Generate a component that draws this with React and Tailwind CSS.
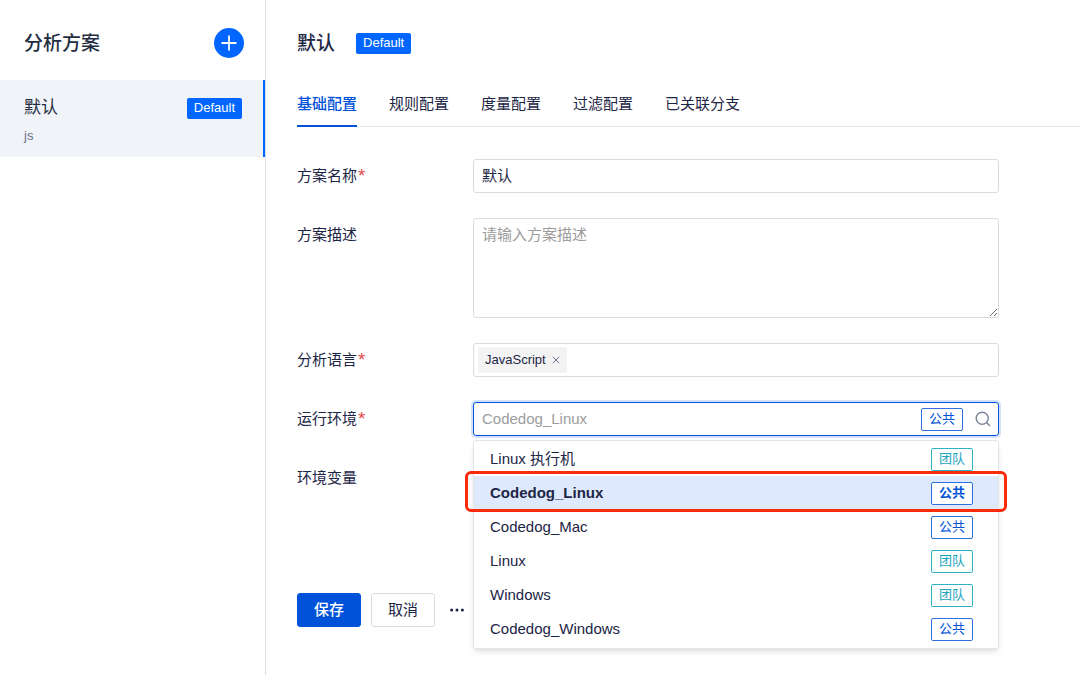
import React, { useState } from 'react';
import { clsx } from 'clsx';

const TABS = ['基础配置', '规则配置', '度量配置', '过滤配置', '已关联分支'];

const ENVS = [
  { name: 'Linux 执行机', scope: '团队' },
  { name: 'Codedog_Linux', scope: '公共' },
  { name: 'Codedog_Mac', scope: '公共' },
  { name: 'Linux', scope: '团队' },
  { name: 'Windows', scope: '团队' },
  { name: 'Codedog_Windows', scope: '公共' },
];

function DefaultBadge() {
  return (
    <span className="h-[21px] px-[7px] rounded-xs bg-[#0066ff] text-[13px] leading-5 text-white">
      Default
    </span>
  );
}

function ScopeTag({ scope }) {
  return (
    <span
      className={clsx(
        'shrink-0 h-[23px] px-[7px] border rounded-xs bg-white text-[13px] leading-5',
        scope === '公共' ? 'border-[#2f6fe0] text-[#0052d9]' : 'border-[#2db1c4] text-[#1aa5ba]'
      )}
    >
      {scope}
    </span>
  );
}

function Field({ label, htmlFor, required, children }) {
  return (
    <div className="flex items-start">
      <label htmlFor={htmlFor} className="flex w-[176px] shrink-0 leading-[34px]">
        {label}
        {required && <span className="ml-px text-[19px] text-[#e5484d]">*</span>}
      </label>
      <div className="relative flex-1 min-w-0">{children}</div>
    </div>
  );
}

export default function App() {
  const [activeTab, setActiveTab] = useState(TABS[0]);
  const [env, setEnv] = useState('Codedog_Linux');
  const [name, setName] = useState('默认');

  return (
    <div className="flex min-h-screen bg-white text-[15px] text-[#1c2545] font-['Liberation_Sans','Noto_Sans_CJK_SC',sans-serif]">
      {/* Scheme list */}
      <aside className="w-[266px] shrink-0 border-r border-[#d9dde5]">
        <div className="flex items-center justify-between h-20 pl-6 pr-[21px] pt-[6px]">
          <h2 className="pt-[2px] text-[19px] font-medium text-[#242e42]">分析方案</h2>
          <button
            type="button"
            aria-label="新建"
            className="flex items-center justify-center size-[30px] rounded-full bg-[#0066ff] text-white"
          >
            <svg viewBox="0 0 16 16" className="size-4" stroke="currentColor" strokeWidth="1.8" strokeLinecap="round">
              <path d="M8 1.2v13.6M1.2 8h13.6" />
            </svg>
          </button>
        </div>
        <a href="#default" className="block h-[77px] px-6 pt-[14px] border-r-2 border-[#0066ff] bg-[#f0f3f7]">
          <span className="flex items-center justify-between h-7 -mr-[3px]">
            <span className="text-[17px] text-[#242e42]">默认</span>
            <DefaultBadge />
          </span>
          <span className="block pt-[2px] text-[13px] leading-6 text-[#67728a]">js</span>
        </a>
      </aside>

      <main className="flex-1 min-w-0 pl-[31px]">
        <header className="flex items-center gap-[21px] h-20 pt-[6px]">
          <h1 className="pt-[2px] text-[19px] font-medium">默认</h1>
          <DefaultBadge />
        </header>

        <nav role="tablist" className="flex gap-8 h-[47px] border-b border-[#e3e6ed]">
          {TABS.map((tab) => (
            <button
              key={tab}
              type="button"
              role="tab"
              aria-selected={tab === activeTab}
              onClick={() => setActiveTab(tab)}
              className={clsx(
                'h-[47px] pt-[3px] border-b-2 cursor-pointer',
                tab === activeTab ? 'border-[#0052d9] text-[#0052d9] font-medium' : 'border-transparent'
              )}
            >
              {tab}
            </button>
          ))}
        </nav>

        <form className="pt-8 pr-[81px]" onSubmit={(e) => e.preventDefault()}>
          <div className="flex flex-col gap-[25px]">
            <Field label="方案名称" htmlFor="name" required>
              <input
                id="name"
                value={name}
                onChange={(e) => setName(e.target.value)}
                className="block w-full h-[34px] px-2 pb-[3px] border border-[#dcdcdc] rounded-[3px] outline-none"
              />
            </Field>

            <Field label="方案描述" htmlFor="desc">
              <textarea
                id="desc"
                placeholder="请输入方案描述"
                className="block w-full h-[100px] px-2 py-[5px] border border-[#dcdcdc] rounded-[3px] leading-[22px] placeholder:text-[#9c9c9c] outline-none"
              />
            </Field>

            <Field label="分析语言" htmlFor="lang" required>
              <div className="flex items-center h-[34px] px-1 border border-[#dcdcdc] rounded-[3px]">
                <span className="flex items-center gap-[6px] h-[26px] px-[7px] rounded-[3px] bg-[#f3f3f3] text-[13px]">
                  JavaScript
                  <button type="button" aria-label="移除 JavaScript" className="text-[#6b7286]">
                    <svg viewBox="0 0 8 8" className="size-2" stroke="currentColor" strokeWidth="1">
                      <path d="M.8.8l6.4 6.4M7.2.8L.8 7.2" />
                    </svg>
                  </button>
                </span>
                <input id="lang" className="flex-1 min-w-0 outline-none" />
              </div>
            </Field>

            <Field label="运行环境" htmlFor="env" required>
              <div className="flex items-center h-[34px] pl-2 pr-[7px] border border-[#0052d9] rounded-[3px] ring-2 ring-[#d4e1fb]">
                <input
                  id="env"
                  role="combobox"
                  aria-expanded="true"
                  aria-controls="env-list"
                  placeholder={env}
                  className="flex-1 min-w-0 placeholder:text-[#9c9c9c] outline-none"
                />
                <ScopeTag scope={ENVS.find((e) => e.name === env).scope} />
                <svg viewBox="0 0 16 16" className="size-4 ml-3" fill="none" stroke="#7d8699" strokeWidth="1.4">
                  <circle cx="7.2" cy="7.2" r="6" />
                  <path d="M11.6 11.6l3.4 3.4" />
                </svg>
              </div>

              <ul
                id="env-list"
                role="listbox"
                className="absolute z-10 top-full inset-x-0 mt-1 pt-px pb-[2px] border border-[#e1e5ec] rounded-[3px] bg-white shadow-md"
              >
                {ENVS.map((item) => (
                  <li key={item.name} role="option" aria-selected={item.name === env} className="relative">
                    <button
                      type="button"
                      onClick={() => setEnv(item.name)}
                      className={clsx(
                        'flex items-center justify-between w-full h-[34px] pl-4 pr-[25px] text-left cursor-pointer',
                        item.name === env && 'bg-[#dfe9fd] font-semibold'
                      )}
                    >
                      {item.name}
                      <ScopeTag scope={item.scope} />
                    </button>
                    {item.name === env && (
                      <span className="absolute -inset-x-[9px] -top-[5px] -bottom-[2px] z-10 border-3 border-[#fb2c0c] rounded-md pointer-events-none" />
                    )}
                  </li>
                ))}
              </ul>
            </Field>

            <Field label="环境变量" />
          </div>

          <div className="flex items-center gap-[10px] pt-[98px]">
            <button type="submit" className="h-[34px] px-4 border border-[#0052d9] rounded-[3px] bg-[#0052d9] text-white font-medium">
              保存
            </button>
            <button type="button" className="h-[34px] px-4 border border-[#dcdcdc] rounded-[3px] bg-white">
              取消
            </button>
            <button type="button" aria-label="更多" className="ml-1">
              <svg viewBox="0 0 16 16" className="size-4" fill="currentColor">
                <circle cx="2.6" cy="8" r="1.5" />
                <circle cx="8" cy="8" r="1.5" />
                <circle cx="13.4" cy="8" r="1.5" />
              </svg>
            </button>
          </div>
        </form>
      </main>
    </div>
  );
}
